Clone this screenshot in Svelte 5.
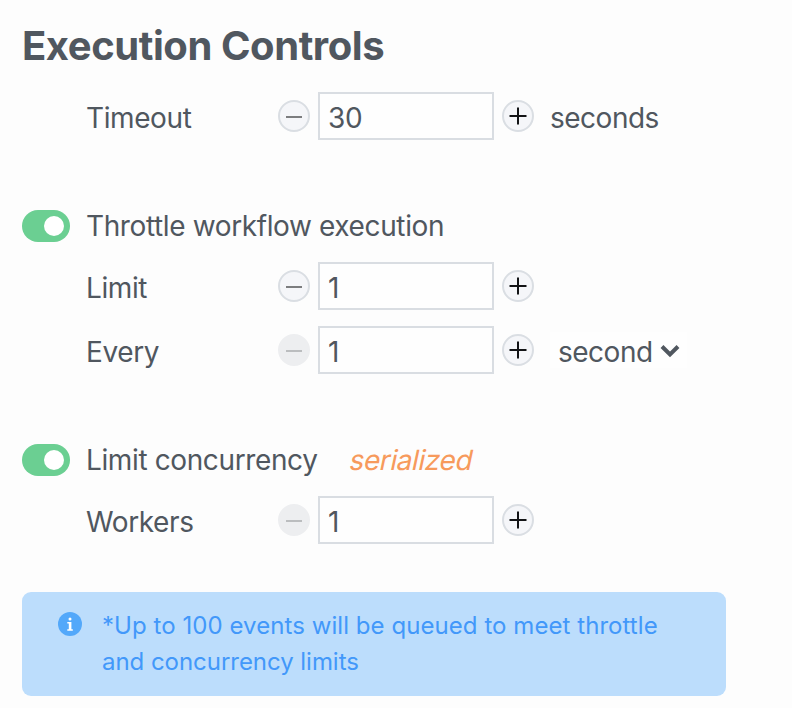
<script>
  let timeout = $state(30);
  let limit = $state(1);
  let every = $state(1);
  let workers = $state(1);
  let throttled = $state(true);
  let limited = $state(true);
</script>

{#snippet stepper(value, min, change)}
  <div class="stepper">
    <button class="round" disabled={value <= min} aria-label="Decrease" onclick={() => change(value - 1)}>
      <svg viewBox="0 0 32 32"><path class="minus" d="M8 17H24" /></svg>
    </button>
    <div class="value">{value}</div>
    <button class="round" aria-label="Increase" onclick={() => change(value + 1)}>
      <svg viewBox="0 0 32 32"><path class="plus" d="M7.5 16H24.5M16 7.5V24.5" /></svg>
    </button>
  </div>
{/snippet}

{#snippet toggle(on, flip, label)}
  <button class="toggle" class:off={!on} role="switch" aria-checked={on} aria-label={label} onclick={flip}>
    <span class="knob"></span>
  </button>
{/snippet}

<main>
  <h1>Execution Controls</h1>

  <section>
    <div class="row">
      <span class="label">Timeout</span>
      {@render stepper(timeout, 0, (v) => (timeout = v))}
      <span class="unit">seconds</span>
    </div>
  </section>

  <section>
    <div class="switch-row">
      {@render toggle(throttled, () => (throttled = !throttled), 'Throttle')}
      <span class="title">Throttle workflow execution</span>
    </div>
    <div class="row">
      <span class="label">Limit</span>
      {@render stepper(limit, 0, (v) => (limit = v))}
    </div>
    <div class="row">
      <span class="label">Every</span>
      {@render stepper(every, 1, (v) => (every = v))}
      <div class="select">
        <span>second</span>
        <svg viewBox="0 0 20 14"><path d="M2 2.5L10 10.5L18 2.5" /></svg>
      </div>
    </div>
  </section>

  <section>
    <div class="switch-row">
      {@render toggle(limited, () => (limited = !limited), 'Concurrency')}
      <span class="title">Limit concurrency</span>
      <em>serialized</em>
    </div>
    <div class="row">
      <span class="label">Workers</span>
      {@render stepper(workers, 1, (v) => (workers = v))}
    </div>
  </section>

  <aside>
    <svg viewBox="0 0 24 24">
      <circle cx="12" cy="12" r="12" fill="#53a8fa" />
      <circle cx="12" cy="7" r="1.5" fill="#fff" />
      <path d="M9.3 10H13.4V17.2H14.8V18.8H9.3V17.2H10.8V11.5H9.3Z" fill="#fff" />
    </svg>
    <p><span class="first">*Up to 100 events will be queued to meet throttle</span><br />and concurrency limits</p>
  </aside>
</main>

<style>
  :global(body) {
    background: #fdfdfd;
  }
  main {
    box-sizing: border-box;
    width: 792px;
    height: 708px;
    padding: 20px 22px 0;
    overflow: hidden;
    font-family: Inter, 'Liberation Sans', sans-serif;
    font-size: 28px;
    line-height: 32px;
    letter-spacing: -0.4px;
    color: #50575f;
    white-space: nowrap;
  }
  h1 {
    margin: 0 0 21px;
    font-size: 40px;
    line-height: 51px;
    font-weight: 700;
    letter-spacing: -0.44px;
  }
  section {
    display: flex;
    flex-direction: column;
    gap: 16px;
    margin-bottom: 70px;
  }
  section:nth-of-type(3) {
    margin-bottom: 48px;
  }
  .switch-row {
    display: flex;
    align-items: center;
    height: 32px;
    margin-bottom: 4px;
  }
  .row {
    display: flex;
    align-items: center;
    height: 48px;
    padding-left: 64px;
  }
  .label {
    width: 192px;
    padding-top: 4px;
  }
  .title {
    margin-left: 16px;
    letter-spacing: -0.38px;
  }
  em {
    margin-left: 30.5px;
    color: #f79a5c;
    font-style: normal;
    transform: skewX(-12deg);
    transform-origin: 50% 26px;
  }
  .stepper {
    display: flex;
    align-items: center;
    gap: 8px;
  }
  button {
    padding: 0;
    border: 0;
    flex: none;
  }
  .round {
    box-sizing: border-box;
    width: 32px;
    height: 32px;
    border: 2px solid #dadee3;
    border-radius: 50%;
    background: #f5f6f9;
  }
  .round:disabled {
    border-color: #edeef0;
    background: #edeef0;
  }
  .round svg {
    display: block;
    width: 32px;
    height: 32px;
    margin: -2px;
    fill: none;
    stroke-width: 2;
  }
  .minus {
    stroke: #7c7d7f;
  }
  .round:disabled .minus {
    stroke: #bbbdbf;
  }
  .plus {
    stroke: #131416;
  }
  .value {
    box-sizing: border-box;
    width: 176px;
    height: 48px;
    padding: 8px 8px 0;
    border: 2px solid #d9dde2;
    background: #fefefe;
    letter-spacing: -0.2px;
  }
  .unit {
    margin-left: 16px;
    padding-top: 4px;
    letter-spacing: -0.5px;
  }
  .select {
    display: flex;
    align-items: center;
    gap: 7px;
    margin-left: 16px;
    padding: 4px 7px 0 8px;
    background: #fefefe;
    letter-spacing: -0.5px;
  }
  .select svg {
    width: 20px;
    height: 14px;
    margin-top: -3px;
    fill: none;
    stroke: #50575f;
    stroke-width: 4;
  }
  .toggle {
    display: flex;
    align-items: center;
    justify-content: flex-end;
    box-sizing: border-box;
    width: 48px;
    height: 32px;
    padding: 0 6px;
    border-radius: 16px;
    background: #6bcf92;
  }
  .toggle.off {
    justify-content: flex-start;
    background: #ccd1d7;
  }
  .knob {
    width: 20px;
    height: 20px;
    border-radius: 50%;
    background: #fff;
  }
  aside {
    display: flex;
    box-sizing: border-box;
    width: 704px;
    height: 104px;
    padding: 16px 36px;
    border-radius: 9px;
    background: #bcddfc;
    color: #4298fa;
    font-size: 24px;
    line-height: 36px;
    letter-spacing: -0.04px;
  }
  aside svg {
    flex: none;
    width: 24px;
    height: 24px;
    margin: 4px 20px 0 0;
  }
  p {
    margin: 0;
  }
  .first {
    letter-spacing: 0.06px;
  }
</style>
